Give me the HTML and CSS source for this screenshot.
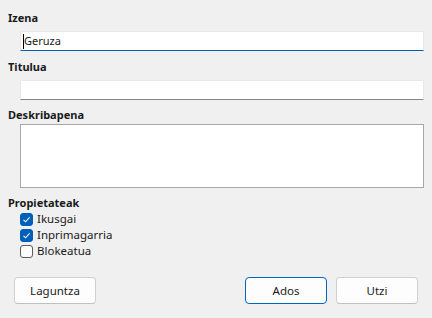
FILE: index.html
```html
<!DOCTYPE html>
<html lang="eu">
<head>
  <meta charset="UTF-8">
  <title>Geruza</title>
  <link rel="stylesheet" href="styles.css">
</head>
<body>

<div class="dialog">
  <div class="label first">Izena</div>
  <div class="field focused"><span class="caret"></span>Geruza</div>

  <div class="label">Titulua</div>
  <div class="field"></div>

  <div class="label desc">Deskribapena</div>
  <div class="textarea"></div>

  <div class="label props">Propietateak</div>
  <div class="checks">
    <div class="check"><span class="box on"><svg viewBox="0 0 13 13" width="13" height="13"><path d="M3.5 6.8 L5.6 8.8 L9.6 4.4" fill="none" stroke="#fff" stroke-width="1.1"/></svg></span>Ikusgai</div>
    <div class="check"><span class="box on"><svg viewBox="0 0 13 13" width="13" height="13"><path d="M3.5 6.8 L5.6 8.8 L9.6 4.4" fill="none" stroke="#fff" stroke-width="1.1"/></svg></span>Inprimagarria</div>
    <div class="check"><span class="box"></span>Blokeatua</div>
  </div>

  <!-- botoiak -->
  <div class="buttons">
    <div class="btn">Laguntza</div>
    <div class="spacer"></div>
    <div class="btn default">Ados</div>
    <div class="btn">Utzi</div>
  </div>
</div>

</body>
</html>
```

FILE: styles.css
```css
body {
  margin: 0;
  background: #f0f0f0;
  font-family: "Noto Sans", "Open Sans", sans-serif;
  font-size: 11px;
  color: #1a1a1a;
}

.dialog {
  width: 432px;
  height: 318px;
  padding: 0 8px;
  box-sizing: border-box;
}

.label {
  font-weight: bold;
  line-height: 16px;
  height: 16px;
  margin-top: 8px;
}

.label.first {
  padding-top: 10px;
  margin-top: 0;
}

.label.desc {
  margin-top: 7px;
}

.label.props {
  margin-top: 7px;
}

.field {
  margin: 5px 0 0 12px;
  height: 20px;
  box-sizing: border-box;
  background: #fff;
  border: 1px solid #e8e8e8;
  border-bottom: 1px solid #868686;
  line-height: 18px;
  padding-left: 3px;
  display: flex;
  align-items: center;
}

.field.focused {
  border-bottom: 1px solid #005fb8;
}

.caret {
  width: 1px;
  height: 15px;
  background: #000;
  margin-left: -1px;
}

.textarea {
  margin: 1px 0 0 12px;
  height: 64px;
  box-sizing: border-box;
  background: #fff;
  border: 1px solid #a8a8a8;
}

.checks {
  margin-left: 12px;
}

.check {
  display: flex;
  align-items: center;
  height: 16px;
  line-height: 16px;
  font-size: 11.5px;
}

.box {
  width: 13px;
  height: 13px;
  box-sizing: border-box;
  border: 1px solid #5c5c5c;
  border-radius: 3px;
  background: #fbfbfb;
  margin-right: 4px;
  display: flex;
}

.box.on {
  background: #005fb8;
  border-color: #005fb8;
}

.box svg {
  margin: -1px;
}

.buttons {
  display: flex;
  gap: 9px;
  margin: 18px 6px 0 6px;
}

.spacer {
  flex: 1;
}

.btn {
  width: 82px;
  height: 27px;
  box-sizing: border-box;
  border: 1px solid #d0d0d0;
  border-bottom-color: #c0c0c0;
  border-radius: 4px;
  background: #fdfdfd;
  display: flex;
  align-items: center;
  justify-content: center;
  font-size: 11.5px;
}

.btn.default {
  border-color: #0067c0;
}
```
